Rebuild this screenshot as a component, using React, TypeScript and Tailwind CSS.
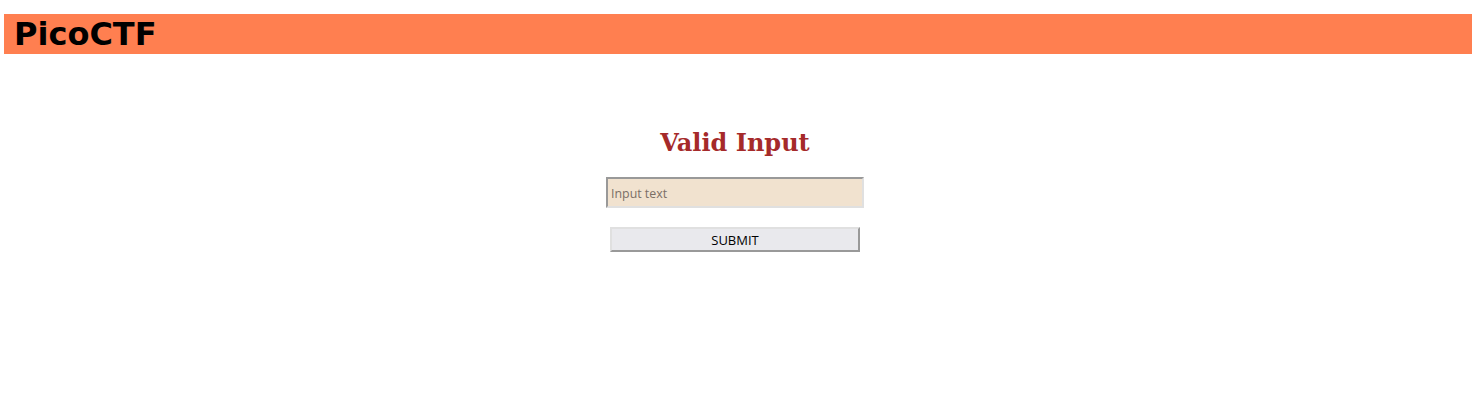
import React from 'react';

export default function App() {
  return (
    <div className="min-h-[409px] bg-white pt-[14px] pl-[4px]">
      <header className="h-[40px] bg-[#ff7f50] flex items-center pl-[10px]">
        <h1 className="font-['DejaVu_Sans',sans-serif] font-bold text-[32px] leading-none text-black">
          PicoCTF
        </h1>
      </header>

      <main className="flex flex-col items-center pt-[75px] pr-[6px]">
        <h2 className="font-['DejaVu_Serif',serif] font-bold text-[24px] leading-[28px] text-[#a52a2a]">
          Valid Input
        </h2>
        <form className="flex flex-col items-center mt-[20px]" onSubmit={(e) => e.preventDefault()}>
          <input
            type="text"
            placeholder="Input text"
            className="w-[258px] h-[31px] bg-[#f1e2cf] border-2 border-t-[#999] border-l-[#999] border-b-[#e0e0e0] border-r-[#e0e0e0] px-[3px] pt-[2px] font-['Open_Sans',sans-serif] text-[12.4px] text-[#333] placeholder:text-[#7a6f66] outline-none"
          />
          <button
            type="submit"
            className="mt-[19px] w-[250px] h-[25px] bg-[#e9e9ed] border-2 border-t-[#e0e0e0] border-l-[#e0e0e0] border-b-[#999] border-r-[#999] pt-[2px] font-['Open_Sans',sans-serif] text-[13px] leading-none text-black"
          >
            SUBMIT
          </button>
        </form>
      </main>
    </div>
  );
}
